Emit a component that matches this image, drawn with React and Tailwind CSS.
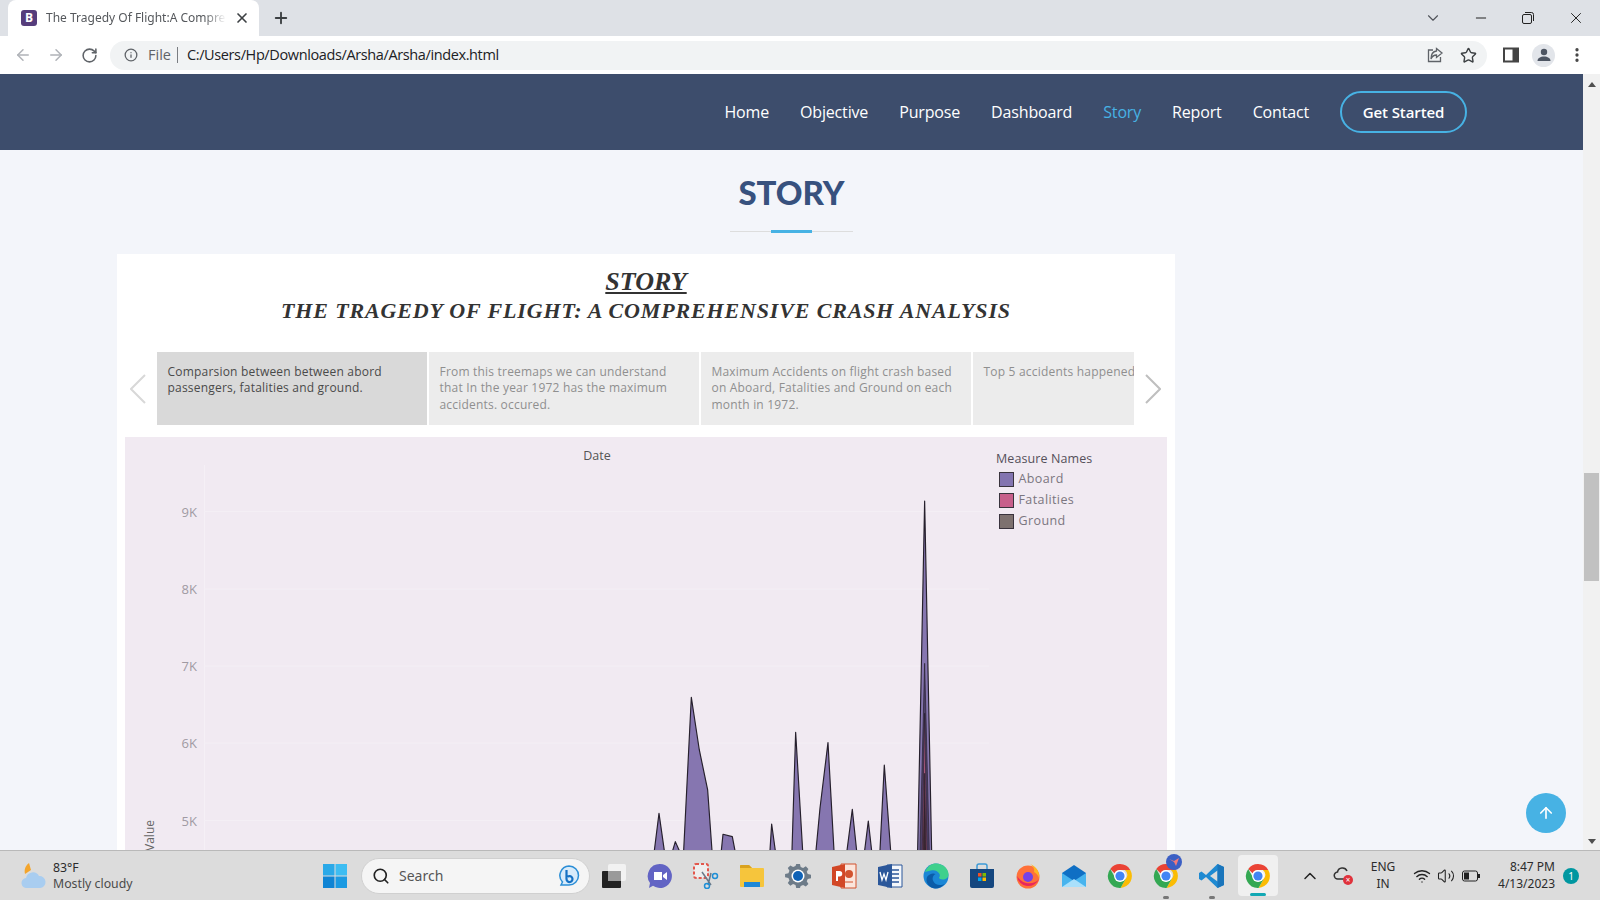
import { ArrowLeft, ArrowRight, ArrowUp, ChevronDown, ChevronUp, Info, Minus, MoreVertical, Plus, RotateCw, Search, Star, Volume2, Wifi, X } from 'lucide-react'

const NAV = ['Home', 'Objective', 'Purpose', 'Dashboard', 'Story', 'Report', 'Contact']

const TILES = [
  { w: 'w-[270px]', text: 'Comparsion between between abord passengers, fatalities and ground.', active: true },
  { w: 'w-[270px]', text: 'From this treemaps we can understand that In the year 1972 has the maximum accidents. occured.' },
  { w: 'w-[270px]', text: 'Maximum Accidents on flight crash based on Aboard, Fatalities and Ground on each month in 1972.' },
  { w: 'w-[161px]', text: 'Top 5 accidents happened', clip: true },
]

const TICKS = [
  { label: '9K', y: 74.5 },
  { label: '8K', y: 152 },
  { label: '7K', y: 229 },
  { label: '6K', y: 306 },
  { label: '5K', y: 383.5 },
]

// points read off the reference, in 3x crop units
const PEAKS = [
  '100,1112 114,1000 130,1112',
  '155,1112 163,1085 175,1112',
  '188,1112 211,652 235,810 260,930 273,1112',
  '301,1112 306,1063 334,1070 342,1112',
  '447,1112 452,1032 463,1112',
  '513,1112 524,757 545,1112',
  '585,1112 597,985 621,788 639,1112',
  '678,1112 694,988 707,1112',
  '731,1112 742,1023 752,1112',
  '777,1112 790,855 809,1112',
  '890,1112 911,63 932,1112',
]

const LEGEND = [
  { label: 'Aboard', color: 'bg-[#8374b0]' },
  { label: 'Fatalities', color: 'bg-[#c75f8b]' },
  { label: 'Ground', color: 'bg-[#7d716f]' },
]

export default function App() {
  return (
    <div className="w-[1600px] h-[900px] overflow-hidden flex flex-col font-['Open_Sans',sans-serif]">
      <TabStrip />
      <Toolbar />
      <div className="flex h-[776px] min-h-0">
        <Page />
        <Scrollbar />
      </div>
      <Taskbar />
    </div>
  )
}

// ─── Browser chrome ───────────────────────────────────────────────────────────

function TabStrip() {
  return (
    <div className="h-9 shrink-0 bg-[#dee1e6] flex items-center pl-2">
      <div className="w-[251px] h-9 bg-white rounded-t-lg flex items-center pl-[13px]">
        <div className="w-4 h-4 rounded-[3px] bg-[#563d7c] text-white text-[12px] font-bold leading-4 text-center">B</div>
        <span className="ml-[9px] w-[180px] overflow-hidden whitespace-nowrap text-[12px] text-[#55585c] font-['Noto_Sans',sans-serif] [mask-image:linear-gradient(to_right,black_88%,transparent)]">
          The Tragedy Of Flight:A Compreh
        </span>
        <X className="ml-[8px] w-4 h-4 text-[#3c4043]" strokeWidth={2.5} />
      </div>
      <Plus className="ml-[13px] w-[18px] h-[18px] text-[#3c4043]" strokeWidth={2.5} />
      <div className="flex-1" />
      <div className="flex items-center">
        <ChevronDown className="w-[18px] h-[18px] text-[#50535a] mr-[31px]" strokeWidth={1.5} />
        <Minus className="w-[16px] h-[16px] text-[#222] mr-[33px]" strokeWidth={1.5} />
        <svg className="w-3 h-3 text-[#222] mr-[33px]" viewBox="0 0 12 12" fill="none" stroke="currentColor">
          <rect x="0.5" y="2.5" width="9" height="9" rx="1.5" />
          <path d="M3 0.5h6.5a2 2 0 0 1 2 2V9" />
        </svg>
        <X className="w-[18px] h-[18px] text-[#222] mr-[15px]" strokeWidth={1.3} />
      </div>
    </div>
  )
}

function Toolbar() {
  return (
    <div className="h-[38px] shrink-0 bg-white flex items-center">
      <ArrowLeft className="ml-[14px] w-[18px] h-[18px] text-[#b0b3b8]" strokeWidth={2} />
      <ArrowRight className="ml-[15px] w-[18px] h-[18px] text-[#b0b3b8]" strokeWidth={2} />
      <RotateCw className="ml-[16px] w-[17px] h-[17px] text-[#5f6368]" strokeWidth={2.2} />
      <div className="ml-[12px] w-[1377px] h-[29px] rounded-full bg-[#f1f3f4] flex items-center pl-[14px] text-[14.5px]">
        <Info className="w-[14px] h-[14px] text-[#5f6368]" strokeWidth={2.2} />
        <span className="ml-[10px] text-[#5f6368]">File</span>
        <span className="ml-[6px] w-px h-4 bg-[#7a7d82]" />
        <span className="ml-[9px] text-[#202124] tracking-[-0.38px]">C:/Users/Hp/Downloads/Arsha/Arsha/index.html</span>
        <div className="flex-1" />
        <svg className="w-[18px] h-[18px] text-[#5f6368]" viewBox="0 0 18 18" fill="none" stroke="currentColor" strokeWidth="1.3">
          <path d="M7 4H2.5v11.5h12V11" />
          <path d="M10.5 2.5 16 7l-5.5 4.5V9C8 9 6 10.5 5 13c0-4.5 2-7.5 5.5-8z" />
        </svg>
        <Star className="ml-[16px] mr-[10px] w-[17px] h-[17px] text-[#3c4043]" strokeWidth={2} />
      </div>
      <svg className="ml-[16px] w-[16px] h-[16px]" viewBox="0 0 16 16">
        <path d="M1 1.5h14v13H1z" fill="none" stroke="#444" strokeWidth="2" />
        <path d="M9.5 2h5v12h-5z" fill="#444" />
      </svg>
      <div className="ml-[13px] w-[23px] h-[23px] rounded-full bg-[#e2e5ea] flex items-center justify-center">
        <svg className="w-4 h-4" viewBox="0 0 16 16" fill="#4d5562">
          <circle cx="8" cy="5" r="3.2" />
          <path d="M1.5 14c0-3 3-4.5 6.5-4.5s6.5 1.5 6.5 4.5z" />
        </svg>
      </div>
      <MoreVertical className="ml-[13px] w-[18px] h-[18px] text-[#444]" strokeWidth={2.4} />
    </div>
  )
}

function Scrollbar() {
  return (
    <div className="w-[17px] shrink-0 bg-[#f1f1f1] flex flex-col items-center">
      <div className="mt-[8px] w-0 h-0 border-x-[4px] border-x-transparent border-b-[5px] border-b-[#505050]" />
      <div className="mt-[386px] w-[15px] h-[108px] bg-[#c1c1c1]" />
      <div className="mt-[258px] w-0 h-0 border-x-[4px] border-x-transparent border-t-[5px] border-t-[#505050]" />
    </div>
  )
}

// ─── The web page ─────────────────────────────────────────────────────────────

function Page() {
  return (
    <div className="relative flex-1 min-w-0 bg-[#f3f5fa] overflow-hidden">
      <header className="h-[76px] bg-[#3d4d6c] flex items-center justify-end pr-[116px] gap-[31px] text-[16px] tracking-[-0.16px] font-medium text-white">
        {NAV.map((item) => (
          <span key={item} className={item === 'Story' ? 'text-[#47b2e4]' : ''}>{item}</span>
        ))}
        <span className="w-[127px] h-[42px] rounded-full border-2 border-[#47b2e4] flex items-center justify-center text-[15px] tracking-[-0.1px] font-semibold">
          Get Started
        </span>
      </header>

      <div className="ml-[730px] w-[123px] pt-[19px]">
        <h2 className="text-center text-[33px] leading-[46px] font-black text-[#37517e] font-['Lato',sans-serif]">STORY</h2>
        <div className="mt-[16px] h-px bg-[#dddddd] flex justify-center">
          <div className="w-[41px] h-[3px] -mt-px bg-[#47b2e4]" />
        </div>
      </div>

      <section className="ml-[117px] mt-[22px] w-[1058px] h-[700px] bg-white">
        <div className="pt-[13px] text-center font-['Liberation_Serif',serif] italic font-bold text-[#333]">
          <div className="text-[26px] leading-[29px] underline">STORY</div>
          <div className="text-[22px] leading-[30px] tracking-[0.85px]">THE TRAGEDY OF FLIGHT: A COMPREHENSIVE CRASH ANALYSIS</div>
        </div>

        <div className="mt-[26px] flex items-center">
          <svg className="ml-[13px] w-4 h-[30px] text-[#d8d8d8]" viewBox="0 0 16 30" fill="none" stroke="currentColor" strokeWidth="2">
            <polyline points="15,1 1,15 15,29" />
          </svg>
          <div className="ml-[11px] flex gap-[2px]">
            {TILES.map((tile) => (
              <div
                key={tile.text}
                className={`${tile.w} h-[73px] pl-[10.5px] pr-3 pt-[12px] text-[12px] leading-[16.4px] tracking-[0.2px] overflow-hidden ${
                  tile.active ? 'bg-[#d9d9d9] text-[#4a4a4a]' : 'bg-[#ececec] text-[#8f8f8f]'
                } ${tile.clip ? 'whitespace-nowrap pr-0' : ''}`}
              >
                {tile.text}
              </div>
            ))}
          </div>
          <svg className="ml-[11px] w-4 h-[30px] text-[#bfbfbf]" viewBox="0 0 16 30" fill="none" stroke="currentColor" strokeWidth="2">
            <polyline points="1,1 15,15 1,29" />
          </svg>
        </div>

        <Chart />
      </section>

      <div className="absolute left-[1526px] top-[719px] w-10 h-10 rounded-full bg-[#47b2e4] flex items-center justify-center">
        <ArrowUp className="w-[18px] h-[18px] text-white" strokeWidth={2.2} />
      </div>
    </div>
  )
}

function Chart() {
  return (
    <div className="mt-3 ml-2 w-[1042px] h-[420px] bg-[#f1eaf2] flex overflow-hidden">
      <svg className="w-[865px] h-[420px] shrink-0" viewBox="0 0 865 420">
        <line x1="79.5" y1="28" x2="79.5" y2="420" stroke="#f5f0f6" />
        {TICKS.map((t) => (
          <g key={t.label}>
            <line x1="79" y1={t.y} x2="864" y2={t.y} stroke="#f4eff5" />
            <text x="72" y={t.y + 5} textAnchor="end" fontSize="13" fill="#a09aa3">{t.label}</text>
          </g>
        ))}
        <text x="472" y="23" textAnchor="middle" fontSize="12.5" fill="#555">Date</text>
        <text transform="translate(29 383) rotate(-90)" textAnchor="end" fontSize="12" fill="#666">Value</text>
        <g transform="translate(496 43) scale(0.3333)" stroke="#26202c" strokeWidth="3.5" strokeLinejoin="round">
          {PEAKS.map((p) => (
            <polygon key={p} points={p} fill="#8676b0" />
          ))}
          <polygon points="897,1112 911,550 925,1112" fill="#4d3f68" strokeWidth="2" />
          <polygon points="904,1112 911,700 918,1112" fill="#b55f87" strokeWidth="2" />
          <polygon points="907,1112 911,880 915,1112" fill="#3a2630" strokeWidth="2" />
        </g>
      </svg>
      <div className="pt-[14px] pl-[6px] text-[12.5px] tracking-[0.1px]">
        <div className="leading-[16px] text-[#55505a]">Measure Names</div>
        <div className="mt-[2px] flex flex-col">
          {LEGEND.map((l) => (
            <div key={l.label} className="h-[21px] flex items-center pl-[3px] text-[#7b7680]">
              <span className={`w-[15px] h-[15px] border border-[#39333d] ${l.color}`} />
              <span className="ml-[4.5px] tracking-[0.4px]">{l.label}</span>
            </div>
          ))}
        </div>
      </div>
    </div>
  )
}

// ─── Windows taskbar ──────────────────────────────────────────────────────────

function Chrome({ size = 26 }) {
  return (
    <svg width={size} height={size} viewBox="0 0 48 48">
      <path d="M24 2a22 22 0 0 1 19 11H24a11 11 0 0 0-10 6L6 11A22 22 0 0 1 24 2z" fill="#ea4335" />
      <path d="M43 13a22 22 0 0 1-18 33l9-16a11 11 0 0 0-1-17z" fill="#fbbc04" />
      <path d="M25 46A22 22 0 0 1 6 11l9 16a11 11 0 0 0 10 7l9-4z" fill="#34a853" />
      <circle cx="24" cy="24" r="11" fill="#fff" />
      <circle cx="24" cy="24" r="8.5" fill="#4285f4" />
    </svg>
  )
}

function TaskIcon({ children, active, dot }) {
  return (
    <div className={`relative flex items-center justify-center ${active ? 'w-10 h-[41px] mx-[3px] bg-[#f0f0f0] rounded' : 'w-[46px] h-[46px]'}`}>
      {children}
      {dot && <span className="absolute bottom-0 w-[6px] h-[3px] rounded-full bg-[#777]" />}
      {active && <span className="absolute bottom-0 w-4 h-[3px] rounded-full bg-[#12a8b4]" />}
    </div>
  )
}

function Taskbar() {
  return (
    <div className="h-[50px] shrink-0 bg-[#dcdcdc] border-t border-[#b9b9b9] flex items-center text-[#2b2b2b] font-['Noto_Sans',sans-serif]">
      <svg className="ml-[20px] w-[27px] h-[27px]" viewBox="0 0 27 27">
        <path d="M9 1l2 7-6 4c-1-4 0-8 4-11z" fill="#f4a52c" />
        <path d="M7 26a5 5 0 0 1-1-10 7 7 0 0 1 13-2 6 6 0 0 1 1 12z" fill="#a9cdf0" />
      </svg>
      <div className="ml-[6px] w-[90px] text-[12.3px] leading-[16px]">
        <div>83°F</div>
        <div className="text-[#4a4a4a]">Mostly cloudy</div>
      </div>

      <svg className="ml-[180px] w-6 h-6" viewBox="0 0 24 24">
        <path d="M0 0h11.5v11.5H0z" fill="#2aa9e8" />
        <path d="M12.5 0H24v11.5H12.5z" fill="#3dbdf2" />
        <path d="M0 12.5h11.5V24H0z" fill="#0f84d4" />
        <path d="M12.5 12.5H24V24H12.5z" fill="#1b9ae2" />
      </svg>

      <div className="ml-[14px] w-[229px] h-[36px] rounded-full bg-[#f5f5f5] border border-[#d0d0d0] flex items-center pl-[10px] pr-[9px]">
        <Search className="w-[18px] h-[18px] text-[#222]" strokeWidth={2.2} />
        <span className="ml-[9px] text-[14px] text-[#555]">Search</span>
        <div className="flex-1" />
        <svg className="w-[22px] h-[24px]" viewBox="0 0 22 24">
          <path d="M11 2a9.5 9.5 0 0 1 0 19H3l1.5-3A9.5 9.5 0 0 1 11 2z" fill="#d8ebfa" stroke="#2b8ed6" strokeWidth="1.5" />
          <path d="M8.5 6v9a3 3 0 1 0 1-2.2" fill="none" stroke="#1571c4" strokeWidth="2.2" />
        </svg>
      </div>

      <div className="ml-[1px] flex items-center">
        <TaskIcon>
          <svg width="26" height="26" viewBox="0 0 26 26">
            <rect x="7" y="1" width="18" height="17" rx="2" fill="#f2f2f2" />
            <rect x="1" y="8" width="19" height="17" rx="1" fill="#222" />
            <rect x="7" y="8" width="13" height="10" fill="#9a9a9a" />
          </svg>
        </TaskIcon>
        <TaskIcon>
          <svg width="26" height="26" viewBox="0 0 26 26">
            <path d="M13 1a12 12 0 1 1-7 21.8L2 25l1-5A12 12 0 0 1 13 1z" fill="#6264c4" />
            <path d="M7 9h8v8H7zM16 12l4-3v8l-4-3z" fill="#fff" />
          </svg>
        </TaskIcon>
        <TaskIcon>
          <svg width="26" height="26" viewBox="0 0 26 26" fill="none">
            <rect x="1" y="1" width="14" height="14" rx="2" fill="#eeeeee" stroke="#e2574c" strokeWidth="2" strokeDasharray="3 2" />
            <path d="M9 9l9 13M18 10l-3 12" stroke="#6a7a8a" strokeWidth="1.5" />
            <circle cx="22" cy="13" r="2.5" stroke="#1f8fd6" strokeWidth="1.5" />
            <circle cx="14" cy="23" r="2.5" stroke="#1f8fd6" strokeWidth="1.5" />
          </svg>
        </TaskIcon>
        <TaskIcon>
          <svg width="26" height="24" viewBox="0 0 26 24">
            <path d="M1 2a1 1 0 0 1 1-1h8l3 3h11a1 1 0 0 1 1 1v17a1 1 0 0 1-1 1H2a1 1 0 0 1-1-1z" fill="#f6c53c" />
            <path d="M1 2a1 1 0 0 1 1-1h8l3 3H1z" fill="#d9a21f" />
            <path d="M5 18h16v5H5z" fill="#1e88d8" />
          </svg>
        </TaskIcon>
        <TaskIcon>
          <svg width="26" height="26" viewBox="0 0 26 26">
            <path d="M11 1h4l.8 3.3 2.6 1.1 2.9-1.8 2.8 2.8-1.8 2.9 1.1 2.6L27 12.7v3.6l-3.6.8-1.1 2.6 1.8 2.9-2.8 2.8-2.9-1.8-2.6 1.1L15 27h-4l-.8-3.3-2.6-1.1-2.9 1.8-2.8-2.8 1.8-2.9-1.1-2.6L-1 15.3v-3.6l3.6-.8 1.1-2.6-1.8-2.9 2.8-2.8 2.9 1.8 2.6-1.1z" transform="translate(1 0) scale(.93)" fill="#6d7b88" />
            <circle cx="13" cy="13" r="6.5" fill="#fff" />
            <circle cx="13" cy="13" r="5" fill="#0f62b6" />
          </svg>
        </TaskIcon>
        <TaskIcon>
          <svg width="26" height="26" viewBox="0 0 26 26">
            <path d="M10 1h15v24H10z" fill="#fbe5dc" stroke="#d2532f" />
            <circle cx="18" cy="11" r="4" fill="#d2532f" />
            <path d="M14 19h8" stroke="#d2532f" />
            <path d="M1 4l13-3v24L1 22z" fill="#d24726" />
            <path d="M5 8h3.5a2.5 2.5 0 0 1 0 5.5H7V18H5z" fill="#fff" />
          </svg>
        </TaskIcon>
        <TaskIcon>
          <svg width="26" height="26" viewBox="0 0 26 26">
            <path d="M10 2h15v22H10z" fill="#f4f7fb" stroke="#2b579a" />
            <path d="M15 7h7M15 11h7M15 15h7M15 19h7" stroke="#2b579a" strokeWidth="1.5" />
            <path d="M1 4l14-3v24L1 22z" fill="#2b579a" />
            <path d="M3 9l2 8 2-6 2 6 2-8" fill="none" stroke="#fff" strokeWidth="1.3" />
          </svg>
        </TaskIcon>
        <TaskIcon>
          <svg width="26" height="26" viewBox="0 0 26 26">
            <circle cx="13" cy="13" r="12.5" fill="#1b87d6" />
            <path d="M2 9C4 3 9 .5 13 .5c7 0 12.5 5 12.5 11 0 3-2.5 5-6 5-2 0-3.5-1-3.5-2 1-1 1-2 .5-3.500C15 8 11.500 6.500 8 7.500 5.500 8 3.500 8.500 2 9z" fill="#3fd08c" />
            <path d="M12 25.500C6 25 2 19 4 14c2-3 6-4.500 8.500-3-2 1-3.500 3.500-2.500 6.500 1 3 4 4.500 7 4.500 2 0 3.500-.5 4.500-1-2 2.500-5.500 4.500-9.500 4.500z" fill="#0b5ca8" />
          </svg>
        </TaskIcon>
        <TaskIcon>
          <svg width="26" height="26" viewBox="0 0 26 26">
            <path d="M8 6V3a2 2 0 0 1 2-2h6a2 2 0 0 1 2 2v3" fill="none" stroke="#3d9ad6" strokeWidth="1.5" />
            <path d="M1 6h24v17a2 2 0 0 1-2 2H3a2 2 0 0 1-2-2z" fill="#15477f" />
            <path d="M9 10h3.5v3.5H9z" fill="#f25022" />
            <path d="M13.5 10H17v3.5h-3.5z" fill="#7fba00" />
            <path d="M9 14.5h3.5V18H9z" fill="#00a4ef" />
            <path d="M13.5 14.5H17V18h-3.5z" fill="#ffb900" />
          </svg>
        </TaskIcon>
        <TaskIcon>
          <svg width="26" height="26" viewBox="0 0 26 26">
            <circle cx="13" cy="14" r="11.5" fill="#ff7139" />
            <path d="M15 1c6 2 10 8 9 14-1-3-3-5-5-6 1-3-1-6-4-8z" fill="#ffb521" />
            <path d="M2 13a11.5 11.5 0 0 0 22 3c-3 4-8 5-13 4-4-1-7-4-9-7z" fill="#e8265f" />
            <circle cx="13" cy="14" r="5" fill="#7542e5" />
          </svg>
        </TaskIcon>
        <TaskIcon>
          <svg width="26" height="24" viewBox="0 0 26 24">
            <path d="M1 9 13 1l12 8v14H1z" fill="#0f6fc4" />
            <path d="M1 9l12 8 12-8v14H1z" fill="#48b4ee" />
            <path d="M1 23l12-8 12 8z" fill="#a9e0fb" />
          </svg>
        </TaskIcon>
        <TaskIcon><Chrome /></TaskIcon>
        <TaskIcon dot>
          <Chrome />
          <span className="absolute right-[7px] top-[1px] w-4 h-4 rounded-full bg-[#3b5fc4] flex items-center justify-center">
            <svg width="10" height="10" viewBox="0 0 10 10"><path d="M0 2l5 2 5-3-3 8-2-4z" fill="#f27a7a" /></svg>
          </span>
        </TaskIcon>
        <TaskIcon dot>
          <svg width="26" height="26" viewBox="0 0 26 26">
            <path d="M18.5 1 25 4v18l-6.5 3L7 14l-4.500 3.500L0 16V10l2.500-1.500L7 12z" fill="#1f8ad2" />
            <path d="M18.5 7.5 11 13l7.5 5.5z" fill="#dcdcdc" />
            <path d="M18.5 1 25 4v18l-6.5 3z" fill="#1a75bb" />
          </svg>
        </TaskIcon>
        <TaskIcon active><Chrome /></TaskIcon>
      </div>

      <ChevronUp className="ml-[19px] w-[20px] h-[20px] text-[#222]" strokeWidth={1.8} />
      <div className="relative ml-[13px] w-[20px] h-[18px]">
        <svg width="18" height="14" viewBox="0 0 18 14" fill="none" stroke="#333" strokeWidth="1.5">
          <path d="M13 12H5a3.5 3.5 0 0 1-.5-7A5 5 0 0 1 14 4" />
        </svg>
        <span className="absolute right-0 bottom-0 w-[10px] h-[10px] rounded-full bg-[#e0323c] text-white text-[8px] leading-[10px] text-center">×</span>
      </div>
      <div className="ml-[17px] w-[26px] text-center text-[12px] leading-[16.5px]">
        <div>ENG</div>
        <div>IN</div>
      </div>
      <Wifi className="ml-[17px] w-[18px] h-[18px] text-[#222]" strokeWidth={1.8} />
      <Volume2 className="ml-[6px] w-[18px] h-[18px] text-[#222]" strokeWidth={1.4} />
      <svg className="ml-[7px] w-[18px] h-[12px]" viewBox="0 0 18 12" fill="none">
        <rect x="0.5" y="1" width="15" height="10" rx="2" stroke="#222" />
        <rect x="2" y="2.5" width="5" height="7" fill="#222" />
        <rect x="16" y="4" width="2" height="4" fill="#222" />
      </svg>
      <div className="ml-[8px] w-[67px] text-right text-[12px] leading-[16.5px]">
        <div>8:47 PM</div>
        <div>4/13/2023</div>
      </div>
      <span className="ml-[8px] w-4 h-4 rounded-full bg-[#0097a0] text-white text-[10px] leading-4 text-center">1</span>
    </div>
  )
}
